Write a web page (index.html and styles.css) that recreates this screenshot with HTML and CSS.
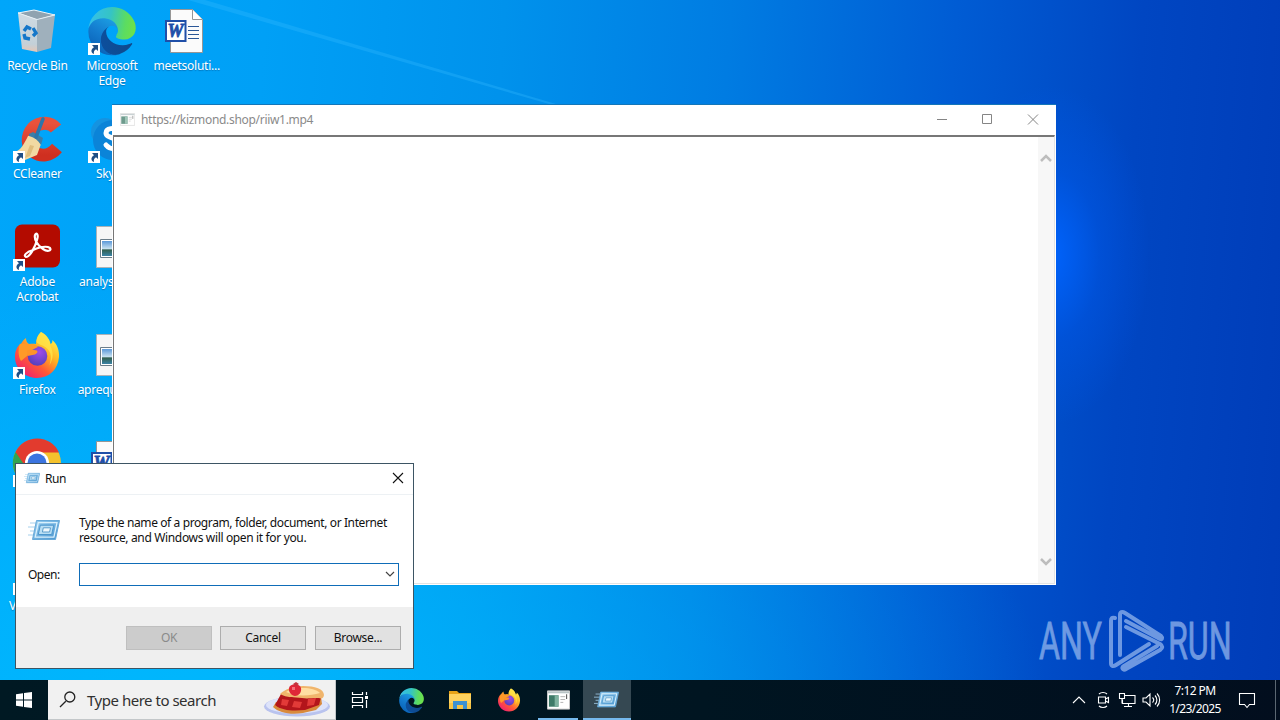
FILE: index.html
```html
<!DOCTYPE html>
<html lang="en">
<head>
<meta charset="utf-8">
<title>Desktop</title>
<link rel="stylesheet" href="styles.css">
</head>
<body>
<svg class="defs" width="0" height="0" aria-hidden="true">
  <defs>
    <linearGradient id="eDark" x1="63" y1="178" x2="241" y2="178" gradientUnits="userSpaceOnUse"><stop offset="0" stop-color="#0c4f9e"/><stop offset="1" stop-color="#0f4a8c"/></linearGradient>
    <linearGradient id="eMid" x1="150" y1="80" x2="50" y2="240" gradientUnits="userSpaceOnUse"><stop offset="0" stop-color="#1b9de2"/><stop offset=".5" stop-color="#147ccf"/><stop offset="1" stop-color="#0a63b8"/></linearGradient>
    <linearGradient id="eTop" x1="10" y1="70" x2="250" y2="110" gradientUnits="userSpaceOnUse"><stop offset="0" stop-color="#35bfe9"/><stop offset=".45" stop-color="#35c4c4"/><stop offset=".8" stop-color="#5bdc62"/><stop offset="1" stop-color="#6ce04c"/></linearGradient>
    <linearGradient id="fBody" x1="40" y1="6" x2="10" y2="44" gradientUnits="userSpaceOnUse"><stop offset="0" stop-color="#fff04a"/><stop offset=".35" stop-color="#ffb423"/><stop offset=".65" stop-color="#ff5a36"/><stop offset="1" stop-color="#f02070"/></linearGradient>
    <radialGradient id="fGlobe" cx=".6" cy=".3" r=".8"><stop offset="0" stop-color="#a04be8"/><stop offset="1" stop-color="#4b3fb8"/></radialGradient>
    <linearGradient id="runFill" x1="0" y1="0" x2="1" y2="1"><stop offset="0" stop-color="#9bd0f1"/><stop offset="1" stop-color="#4693cf"/></linearGradient>
    <linearGradient id="binFront" x1="0" y1="0" x2="0" y2="1"><stop offset="0" stop-color="#cfdbe3"/><stop offset=".8" stop-color="#c3d0d8"/><stop offset="1" stop-color="#e6c6b4"/></linearGradient>
    <linearGradient id="sky" x1="0" y1="0" x2="0" y2="1"><stop offset="0" stop-color="#5b98d8"/><stop offset=".5" stop-color="#c4dff0"/><stop offset=".6" stop-color="#32604f"/><stop offset="1" stop-color="#3b83a6"/></linearGradient>
    <linearGradient id="ccRed" x1="0" y1="0" x2="0" y2="1"><stop offset="0" stop-color="#e8523c"/><stop offset="1" stop-color="#cf2f20"/></linearGradient>
  </defs>
  <symbol id="shortcut" viewBox="0 0 12 12">
    <path fill="#fff" d="M0 0h12v12H0z"/>
    <path fill="#1f4f86" d="M4 2h6v6L8 6.200C6 7.400 5.600 8.800 6 11 2.600 9.500 2.600 6.200 6 4.200z"/>
  </symbol>
  <symbol id="edge" viewBox="4 0 257 259">
    <path fill="url(#eDark)" d="M235.68 195.46a93.73 93.73 0 0 1-10.54 4.71 101.87 101.87 0 0 1-35.9 6.46c-47.32 0-88.54-32.55-88.54-74.32A31.48 31.48 0 0 1 117.130 105c-42.800 1.800-53.800 46.400-53.800 72.530 0 73.880 68.090 81.370 82.760 81.370 7.910 0 19.840-2.300 27-4.560l1.310-.44a128.340 128.340 0 0 0 66.600-52.800 4 4 0 0 0-5.320-5.640z"/>
    <path fill="url(#eMid)" d="M110.340 246.340A79.200 79.200 0 0 1 87.600 225 80.720 80.720 0 0 1 117.130 105c3.120-1.470 8.450-4.130 15.540-4a32.350 32.350 0 0 1 25.690 13 31.880 31.880 0 0 1 6.360 18.660c0-.21 24.460-79.600-80-79.600-43.900 0-80 41.660-80 78.210a130.150 130.150 0 0 0 12.110 56 128 128 0 0 0 156.380 67.110 75.550 75.550 0 0 1-62.780-8z"/>
    <path fill="url(#eTop)" d="M156.940 153.780c-.81 1.050-3.300 2.500-3.300 5.660 0 2.610 1.700 5.120 4.720 7.230 14.380 10 41.490 8.680 41.560 8.680a59.560 59.560 0 0 0 30.270-8.350 61.380 61.380 0 0 0 30.430-52.880c.26-22.410-8-37.310-11.340-43.910C228.090 28.760 182.350.25 132.620.25A128 128 0 0 0 4.620 126.450c.48-36.540 36.800-66.050 80-66.050 3.500 0 23.460.34 42 10.070 16.340 8.580 24.900 18.940 30.850 29.210 6.180 10.670 7.280 24.150 7.280 29.520s-2.740 13.330-7.810 19.580z"/>
  </symbol>
  <symbol id="firefox" viewBox="0 0 48 48">
    <path fill="url(#fBody)" d="M28 1c6 3 9 8 9.500 12 2-.5 2-3 1.800-4 5 4 7.200 11 6.700 17C45 38.500 36 47 24 47S2 37.500 2 26c0-6 2-10 5-13 .2 1 .2 2 .6 3C7.500 12.500 9.500 9.500 13 7c0 3 1 5 3 6 3-.5 5-.5 7 0C23 8 24.500 4 28 1z"/>
    <path fill="#ffe348" opacity=".8" d="M28 1c7 4 9 10 9.500 14 3 6 3 13-1 19 3-10 1-15-6-19-5-2-7-3-7-5C24 6 26 3 28 1z"/>
    <circle cx="24.500" cy="25" r="9.800" fill="url(#fGlobe)"/>
    <path fill="#ff9a28" d="M7 13c3-1 6 0 8 1 4-2 8-1 10 2-3 1-5 3-8 4l-3 5-6 5C5 25 5 18 7 13z"/>
    <path fill="#ff9428" d="M14 20c3-3 7-1 10-.6 1.500 2-1 4-4.500 4.600l-5 1z"/>
  </symbol>
  <symbol id="run" viewBox="0 0 32 24">
    <path d="M2 5h7M0 9h7M2 13h5M0 17h5" stroke="#a5d0ec" stroke-width="1"/>
    <path fill="url(#runFill)" stroke="#67a9d9" d="M8.500 2.500h23l-4 19h-23z"/>
    <path fill="none" stroke="#d9f0fc" stroke-width="1.300" d="M10.300 4.700h18.700l-3.100 14.500H7.200z"/>
    <path fill="#b8def4" stroke="#4c96cc" d="M12.300 7.200h13.400l-2 9.300H10.300z"/>
    <path fill="#eef8fd" stroke="#5c9dcb" d="M15.300 9.800h7.200l-.9 4.200h-7.200z"/>
  </symbol>
  <symbol id="word" viewBox="0 0 48 48">
    <path fill="#fbfbfb" stroke="#969696" stroke-width="1" d="M11.500 2.500h22l10 10v33h-32z"/>
    <path fill="#fff" stroke="#969696" d="M33.500 2.500v10h10"/>
    <path stroke="#2b5797" stroke-width="1" d="M29 19.500h11M29 23.500h11M29 27.500h11M29 31.500h11"/>
    <path fill="#fff" stroke="#1f4fa8" stroke-width="2" d="M7 14h19.500v20H7z"/>
    <text x="16.500" y="30" text-anchor="middle" font-family="Liberation Serif, serif" font-weight="bold" font-style="italic" font-size="18" fill="#1f4fa8" stroke="#1f4fa8" stroke-width=".8">W</text>
  </symbol>
  <symbol id="photo" viewBox="0 0 48 48">
    <path fill="#f6f6f6" stroke="#a9b2b8" d="M8.500 3.500h32v41h-32z"/>
    <path fill="#fff" stroke="#6b7d89" d="M12.500 16.500h24v18h-24z"/>
    <path fill="url(#sky)" d="M14 18h21v15H14z"/>
  </symbol>
  <symbol id="console" viewBox="0 0 24 20">
    <path fill="#fff" stroke="#c9c9c9" d="M.5.5h23v19H.5z"/>
    <path fill="#b8c4c6" d="M1 1h22v2H1z"/>
    <path fill="#3e7a68" d="M2 5h10v12H2z"/>
    <path fill="#7fb2a0" d="M8 5h4v12H8z"/>
    <path stroke="#b3b3b3" d="M14 6.500h5M14 9.500h5M14 12.500h3"/>
    <path stroke="#444" d="M20.500 4v5"/>
  </symbol>
</svg>

<main class="screen">
  <svg class="beam" viewBox="0 0 1280 720" aria-hidden="true">
    <path d="M205 0L556 104L549 104L188 0z" fill="#35bcff" opacity=".32"/>
  </svg>

  <section class="icons">
    <div class="col">
      <div class="item">
        <svg class="pic" viewBox="0 0 48 48">
          <path fill="#8fa3b0" stroke="#edf5f9" stroke-width="1" d="M5 6l16-3 21 5-18 5z"/>
          <path fill="url(#binFront)" d="M5 6l19 6.500V45L9 42z"/>
          <path fill="#9fb0bc" d="M24 12.500L42 8l-4 33-14 4z"/>
          <path fill="none" stroke="#e6f0f5" d="M5 6l19 6.500L42 8"/>
          <g fill="none" stroke="#1577c9" stroke-width="3.400"><path d="M11 24l3-4 4 2"/><path d="M20 21l3 5-3 3"/><path d="M17 32l-5-1-1-4"/></g>
        </svg>
        <span class="label">Recycle Bin</span>
      </div>
      <div class="item">
        <svg class="pic" viewBox="0 0 48 48">
          <path fill="none" stroke="url(#ccRed)" stroke-width="13" d="M43 13.500C38 7 27 6 20 13c-7 8-6 19 1 24 7 5 16 4 23-4"/>
          <path fill="#f2d9a2" d="M15 21c6-2 12 2 13 8l-4 11-12 5-10-8c6-2 9-8 13-16z"/>
          <path fill="#e0bd7c" d="M17 30l-5 13 5-2 4-10z"/>
          <path fill="#3c7ea8" d="M16 19l4-2 10 6-2 7c-3-5-7-8-12-9z"/>
          <path stroke="#2b76ab" stroke-width="3.500" stroke-linecap="round" d="M30 4l-7 18"/>
          <use href="#shortcut" y="36" width="12" height="12"/>
        </svg>
        <span class="label">CCleaner</span>
      </div>
      <div class="item">
        <svg class="pic" viewBox="0 0 48 48">
          <rect x="2" y="1.500" width="45" height="43" rx="7" fill="#b30b00"/>
          <path fill="none" stroke="#fff" stroke-width="2.200" d="M13 34c-3-1 0-5 7-7 7-3 14-4 17-2 2 3-3 4-7 1-6-4-9-10-8-14 1-3 4-1 2 5-2 7-7 17-11 17z"/>
          <use href="#shortcut" y="36" width="12" height="12"/>
        </svg>
        <span class="label">Adobe<br>Acrobat</span>
      </div>
      <div class="item">
        <svg class="pic" viewBox="0 0 48 48"><use href="#firefox" width="48" height="48"/><use href="#shortcut" y="36" width="12" height="12"/></svg>
        <span class="label">Firefox</span>
      </div>
      <div class="item">
        <svg class="pic" viewBox="0 0 48 48">
          <circle cx="24" cy="24" r="24" fill="#f4c22d"/>
          <path fill="#32a350" d="M24 24L24 48A24 24 0 0 1 2.500 13z"/>
          <path fill="#e23b2e" d="M2.500 13A24 24 0 0 1 46 13.500H24L13.500 29z"/>
          <circle cx="24" cy="24" r="12" fill="#fff"/><circle cx="24" cy="24" r="9.500" fill="#3b74e0"/>
          <use href="#shortcut" y="36" width="12" height="12"/>
        </svg>
        <span class="label">Google<br>Chrome</span>
      </div>
      <div class="item">
        <svg class="pic" viewBox="0 0 48 48"><path fill="#f58a1f" d="M20 3h8l11 38H9z"/><use href="#shortcut" y="36" width="12" height="12"/></svg>
        <span class="label">VLC media</span>
      </div>
    </div>
    <div class="col">
      <div class="item">
        <svg class="pic" viewBox="0 0 48 48"><use href="#edge" width="48" height="48"/><use href="#shortcut" y="36" width="12" height="12"/></svg>
        <span class="label">Microsoft<br>Edge</span>
      </div>
      <div class="item">
        <svg class="pic" viewBox="0 0 48 48">
          <circle cx="17" cy="17" r="14" fill="#1593e0"/><circle cx="25" cy="25" r="20" fill="#0b84d8"/>
          <path fill="none" stroke="#fff" stroke-width="5" stroke-linecap="round" d="M31 16c-5-4-13-3-13 2 0 6 14 4 14 11 0 6-10 6-14 1"/>
          <use href="#shortcut" y="36" width="12" height="12"/>
        </svg>
        <span class="label">Skype</span>
      </div>
      <div class="item"><svg class="pic"><use href="#photo" width="48" height="48"/></svg><span class="label">analysisnu...</span></div>
      <div class="item"><svg class="pic"><use href="#photo" width="48" height="48"/></svg><span class="label">aprequired...</span></div>
      <div class="item"><svg class="pic shift"><use href="#word" width="48" height="48"/></svg><span class="label">beginning</span></div>
    </div>
    <div class="col">
      <div class="item"><svg class="pic shift"><use href="#word" width="48" height="48"/></svg><span class="label">meetsoluti...</span></div>
    </div>
  </section>

  <section class="console">
    <header class="console-bar">
      <svg class="console-icon"><use href="#console" width="15" height="13"/></svg>
      <span class="console-title">https://kizmond.shop/riiw1.mp4</span>
      <svg class="controls" viewBox="0 0 138 30"><path fill="none" stroke="#858585" d="M19 14.500h10M64.500 9.500h9v9h-9zM110 9.500l10 10M120 9.500l-10 10"/></svg>
    </header>
    <div class="console-body">
      <div class="scroll">
        <svg viewBox="0 0 16 12"><path d="M3 9l5-5 5 5"/></svg>
        <svg viewBox="0 0 16 12"><path d="M3 3l5 5 5-5"/></svg>
      </div>
    </div>
  </section>

  <svg class="mark" viewBox="0 0 210 70" aria-label="ANY RUN">
    <g fill="#9cbcf0" stroke="#9cbcf0" stroke-width=".8" font-family="Roboto, sans-serif" font-weight="400" font-size="52">
      <text transform="translate(3 54) scale(.62 1)">ANY</text>
      <text transform="translate(132 54) scale(.62 1)">RUN</text>
    </g>
    <g fill="none" stroke="#9cbcf0" stroke-width="4" stroke-linecap="round" stroke-linejoin="round">
      <path d="M79 13c-3-1-4 0-4 3v42c0 3 2 4 5 2l33-21"/>
      <path d="M84 50V10c0-3 2-4 5-2l36 23c2 2 1 4-1 3L90 16"/>
      <path d="M90 22l34 17c3 2 3 4 0 6L90 64c-3 2-5-1-2-3l33-20"/>
    </g>
  </svg>

  <section class="dialog">
    <header class="dialog-bar">
      <svg class="run-small"><use href="#run" width="16" height="12"/></svg>
      <span class="dialog-title">Run</span>
      <svg class="close" viewBox="0 0 12 12"><path stroke="#111" stroke-width="1.100" d="M1 1l10 10M11 1L1 11"/></svg>
    </header>
    <div class="dialog-main">
      <div class="intro">
        <svg class="run-big"><use href="#run" width="32" height="24"/></svg>
        <p><span class="l1">Type the name of a program, folder, document, or Internet</span><br><span class="l2">resource, and Windows will open it for you.</span></p>
      </div>
      <div class="field">
        <span class="open">Open:</span>
        <div class="combo"><svg viewBox="0 0 10 8"><path fill="none" stroke="#444" stroke-width="1.200" d="M1 2l4 4 4-4"/></svg></div>
      </div>
    </div>
    <footer class="actions">
      <span class="btn off">OK</span><span class="btn">Cancel</span><span class="btn">Browse...</span>
    </footer>
  </section>

  <nav class="taskbar">
    <div class="slot"><svg width="16" height="16" viewBox="0 0 16 16"><path fill="#fff" d="M0 2.300l7-1v6.300H0zM8 1.100L16 0v7.600H8zM0 8.500h7v6.300l-7-1zM8 8.500h8V16l-8-1.100z"/></svg></div>
    <div class="search">
      <svg class="lens" viewBox="0 0 17 17"><path fill="none" stroke="#222" stroke-width="1.300" d="M6.800 10.200L1 16M15.800 6a5 5 0 1 1-10 0 5 5 0 0 1 10 0z"/></svg>
      <span>Type here to search</span>
      <svg class="pie" viewBox="0 0 68 36">
        <ellipse cx="34" cy="24.500" rx="33" ry="10" fill="#b9c3ee"/><ellipse cx="34" cy="23" rx="31" ry="8.500" fill="#dde3fa"/>
        <path fill="#d98a3c" d="M10 25l3-5 45-5 1 7-6 6-13 3c-12 2-24 0-30-6z"/>
        <path fill="#b3151b" d="M12 23l6-11 41-1-3 12-14 5c-11 1-23 1-30-5z"/>
        <path fill="#e23a38" d="M19 17l7 1-2 6-6-1zM31 19l8 1-2 6-8-1zM45 17l8-1-2 7-7 1z"/>
        <path fill="#f0b56c" d="M17 12c5-5 14-8 23-8 12 0 21 3 21 9-1 5-3 3-8 3-6 0-8 1-14 0-8-1-15 0-22-4z"/>
        <path fill="#ffdfa3" d="M23 10c8-5 27-6 34 1-10 3-24 4-34-1z"/>
        <path fill="#df2738" d="M26 6c1-5 11-5 12 0 1 5-3 8-6 8s-7-4-6-8z"/>
        <path fill="#f2707a" d="M29 5h3v3h-3z"/>
        <path fill="#c3343c" d="M30 2l3-2 3 2-3 2z"/>
      </svg>
    </div>
    <div class="slot">
      <svg width="18" height="16" viewBox="0 0 18 16"><path fill="none" stroke="#fff" stroke-width="1.200" d="M1.500 0v2.500h10V0M1.500 5.500h10v5h-10zM1.500 16v-2.500h10V16M15.500 0v3M15.500 8v8"/><path fill="#fff" d="M14 4h3v3h-3z"/></svg>
    </div>
    <div class="slot wide"><svg width="25" height="25"><use href="#edge" width="25" height="25"/></svg></div>
    <div class="slot wide">
      <svg width="22" height="20" viewBox="0 0 22 20"><path fill="#e8a317" d="M0 1h8l2 2h12v3H0z"/><path fill="#ffd25e" d="M0 4h22v15H0z"/><path fill="#f7c445" d="M0 13h22v6H0z"/><path fill="#3d91d1" d="M4 11h14v8h-4v-4H8v4H4z"/></svg>
    </div>
    <div class="slot wide"><svg width="24" height="24"><use href="#firefox" width="24" height="24"/></svg></div>
    <div class="slot wide running"><svg width="23" height="20"><use href="#console" width="23" height="20"/></svg></div>
    <div class="slot active"><svg width="25" height="19"><use href="#run" width="25" height="19"/></svg></div>
    <div class="tray">
      <svg viewBox="0 0 24 24"><path d="M6 15l6-6 6 6"/></svg>
      <svg viewBox="0 0 24 24"><path d="M8 6c2-2 6-2 8 0M8 18c2 2 6 2 8 0M7.500 9h7v6h-7zM14.500 11l3-1.500v5l-3-1.500"/></svg>
      <svg viewBox="0 0 24 24"><path d="M10 7.500h10v8H7.500v-4M13.500 15.500V18M9 18.500h8M4.500 5.500h5v5h-5zM7 10.500v5"/></svg>
      <svg viewBox="0 0 24 24"><path d="M4 10h3l4-4v12l-4-4H4zM13.500 9.500c1.500 1.500 1.500 3.500 0 5M16 7.500c2.500 2.500 2.500 6.500 0 9M18 5.500c3.500 3.500 3.500 9.500 0 13"/></svg>
      <div class="clock"><span>7:12 PM</span><span>1/23/2025</span></div>
      <svg class="note" viewBox="0 0 24 24"><path d="M4.500 5.500h15v11h-5l-2.500 3-2.500-3h-5z"/></svg>
      <span class="peek"></span>
    </div>
  </nav>
</main>
</body>
</html>
```

FILE: styles.css
```css
* { box-sizing: border-box; }
body { margin: 0; font-family: "Noto Sans", "Open Sans", sans-serif; font-size: 12px; color: #111; }
.defs { position: absolute; }
symbol { overflow: visible; }
.screen {
  position: relative; width: 1280px; height: 720px; overflow: hidden;
  display: flex; flex-direction: column;
  background:
    radial-gradient(ellipse 100px 170px at 1050px 255px, rgba(0, 100, 255, .95), rgba(0, 90, 240, .4) 50%, rgba(0, 80, 220, 0)),
    radial-gradient(ellipse 850px 480px at 200px 720px, rgba(0, 188, 255, .85), rgba(0, 180, 250, 0)),
    linear-gradient(94deg, #00a6fa 0%, #00a0f6 20%, #0092ec 38%, #007ce2 55%, #005cd4 72%, #0046c2 86%, #003cb8 100%);
}
.beam { position: absolute; inset: 0; }
.icons { flex: 1; min-height: 0; display: flex; padding-top: 7px; }
.col { width: 74.700px; }
.item { height: 108px; display: flex; flex-direction: column; align-items: center; gap: 3px; }
.pic { width: 48px; height: 48px; flex: none; overflow: visible; }
.label {
  color: #fff; line-height: 15px; text-align: center; white-space: nowrap;
  letter-spacing: -.25px; text-shadow: 0 1px 1px rgba(0, 40, 90, .35);
}
.shift { margin-left: -7px; }

/* console window */
.console {
  position: absolute; left: 112px; top: 105px; width: 944px; height: 480px;
  background: #fff; display: flex; flex-direction: column; box-shadow: 0 -1px 0 #1476b8;
}
.console-bar { height: 30px; display: flex; align-items: center; padding-left: 8px; }
.console-icon { width: 15px; height: 13px; margin: -2px 6px 0 0; opacity: .75; }
.console-title { color: #8a8a8a; letter-spacing: -.31px; margin-top: -1px; }
.controls { width: 138px; height: 30px; margin-left: auto; }
.console-body {
  flex: 1; margin: 0 1px 1px; border: solid #777; border-width: 2px 1px 1px 1px;
  border-right-color: #e3e3e3; border-bottom-color: #e3e3e3; display: flex; justify-content: flex-end;
}
.scroll { width: 16.500px; background: #f7f7f7; display: flex; flex-direction: column; justify-content: space-between; padding: 15px 0; }
.scroll svg { width: 16px; height: 12px; fill: none; stroke: #bdbdbd; stroke-width: 2.500; }

.mark { position: absolute; left: 1036px; top: 605px; width: 210px; height: 70px; opacity: .7; overflow: visible; }

/* Run dialog */
.dialog {
  position: absolute; left: 15px; top: 463px; width: 399px; height: 206px;
  background: #fff; border: 1px solid #3d5564; display: flex; flex-direction: column;
}
.dialog-bar { height: 31px; display: flex; align-items: center; padding: 0 9px; border-bottom: 1px solid #edf1f4; }
.run-small { width: 16px; height: 12px; margin: -3px 4px 0 -1px; }
.dialog-title { letter-spacing: -.4px; margin: -1px 0 0 1px; }
.close { width: 12px; height: 12px; margin: -2px 0 0 auto; }
.dialog-main { height: 112px; padding: 20px 14px 0 12px; display: flex; flex-direction: column; gap: 17px; }
.intro { display: flex; align-items: center; }
.run-big { width: 32px; height: 24px; margin-right: 19px; }
.intro p { margin: 0; line-height: 15px; white-space: nowrap; }
.l1 { letter-spacing: -.39px; }
.l2 { letter-spacing: -.35px; }
.field { display: flex; align-items: center; height: 24px; }
.open { width: 51px; letter-spacing: -.5px; }
.combo { flex: 1; height: 23px; border: 1px solid #0f6db8; display: flex; align-items: center; justify-content: flex-end; padding-right: 3px; }
.combo svg { width: 10px; height: 8px; }
.actions { flex: 1; background: #efefef; display: flex; justify-content: flex-end; gap: 8px; padding: 19px 12px 0 0; }
.btn { width: 86px; height: 24px; border: 1px solid #adadad; background: #e1e1e1; text-align: center; line-height: 22px; letter-spacing: -.3px; }
.btn:last-child { margin-left: 1px; }
.off { background: #ccc; border-color: #bfbfbf; color: #8a8a8a; }

/* taskbar */
.taskbar { position: relative; height: 40px; flex: none; display: flex; background: linear-gradient(90deg, #001923, #001521 55%, #020e1e); }
.slot { width: 48px; display: flex; align-items: center; justify-content: center; }
.wide { width: 48.900px; }
.slot.wide:nth-child(4) { margin-left: 3px; }
.running { background: linear-gradient(#76b9ed, #76b9ed) 50% 100% / 40px 2px no-repeat; }
.active { background: #354852; border-bottom: 2px solid #76b9ed; width: 48px; }
.search { width: 288px; background: #f1f1f1; border: 1px solid #c3c7c9; border-width: 0 1px 1px 0; display: flex; align-items: center; padding-left: 11px; color: #303030; font-size: 15px; letter-spacing: -.48px; white-space: nowrap; }
.lens { width: 17px; height: 17px; margin-right: 11px; }
.pie { width: 68px; height: 36px; margin: 0 4px 0 auto; }
.tray { margin-left: auto; display: flex; align-items: center; }
.tray svg { width: 24px; height: 24px; fill: none; stroke: #fff; stroke-width: 1.100; }
.clock { width: 64px; display: flex; flex-direction: column; align-items: center; color: #fff; line-height: 18px; letter-spacing: -.6px; }
.tray .note { margin: 0 16px 0 8px; }
.peek { width: 1px; height: 40px; background: #5b6772; margin-right: 4px; }
```
